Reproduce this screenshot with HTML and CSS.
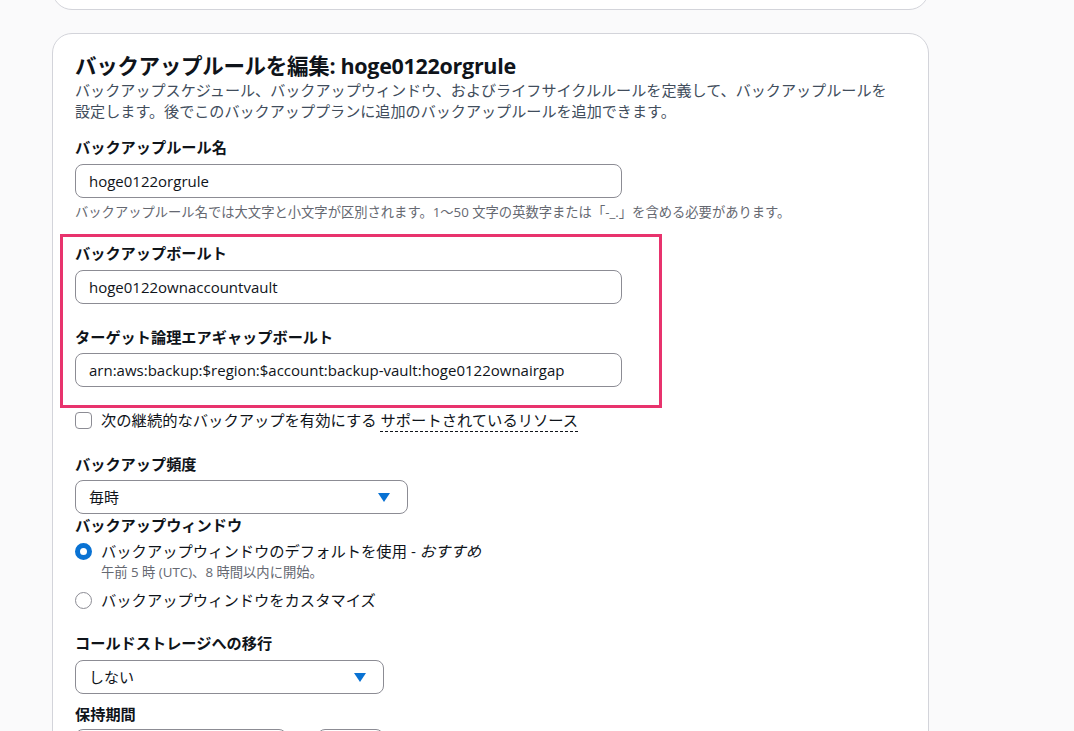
FILE: index.html
```html
<!DOCTYPE html>
<html lang="ja">
<head>
<meta charset="utf-8">
<title>バックアップルールを編集</title>
<link rel="stylesheet" href="styles.css">
</head>
<body>
<div class="page">
  <div class="card card-prev"></div>
  <div class="card card-main">
    <h2 class="title">バックアップルールを編集: hoge0122orgrule</h2>
    <p class="desc">バックアップスケジュール、バックアップウィンドウ、およびライフサイクルルールを定義して、バックアップルールを設定します。後でこのバックアッププランに追加のバックアップルールを追加できます。</p>

    <div class="label l1">バックアップルール名</div>
    <div class="input w-full">hoge0122orgrule</div>
    <div class="hint">バックアップルール名では大文字と小文字が区別されます。1〜50 文字の英数字または「-_.」を含める必要があります。</div>

    <div class="highlight">
      <div class="label hl1">バックアップボールト</div>
      <div class="input w-full">hoge0122ownaccountvault</div>
      <div class="label hl2">ターゲット論理エアギャップボールト</div>
      <div class="input w-full hin2">arn:aws:backup:$region:$account:backup-vault:hoge0122ownairgap</div>
    </div>

    <div class="check-row">
      <span class="checkbox"></span>
      <span class="opt-text">次の継続的なバックアップを有効にする <span class="dotted">サポートされているリソース</span></span>
    </div>

    <div class="label l-freq">バックアップ頻度</div>
    <div class="input select w-freq">毎時<span class="arrow"></span></div>

    <div class="label l-win">バックアップウィンドウ</div>
    <div class="radio-row r1">
      <span class="radio checked"></span>
      <span class="opt-text">バックアップウィンドウのデフォルトを使用 - <em>おすすめ</em></span>
    </div>
    <div class="sub">午前 5 時 (UTC)、8 時間以内に開始。</div>
    <div class="radio-row r2">
      <span class="radio"></span>
      <span class="opt-text">バックアップウィンドウをカスタマイズ</span>
    </div>

    <div class="label l-cold">コールドストレージへの移行</div>
    <div class="input select w-cold">しない<span class="arrow"></span></div>

    <div class="label l-ret">保持期間</div>
    <div class="ret-row">
      <div class="input w-ret1"></div>
      <div class="input w-ret2"></div>
    </div>
  </div>
</div>
</body>
</html>
```
FILE: styles.css
```css
html, body {
  margin: 0;
  padding: 0;
  background: #fafafb;
  height: 100%;
  overflow: hidden;
}
body {
  font-family: "Open Sans", "Noto Sans CJK JP", sans-serif;
  color: #0f141a;
}
.page {
  padding-left: 52px;
  width: 877px;
}
.card {
  background: #ffffff;
  border: 1px solid #d3d4da;
  border-radius: 20px;
  box-sizing: border-box;
}
.card-prev {
  height: 50px;
  margin-top: -40px;
}
.card-main {
  margin-top: 23px;
  padding: 18px 22px 40px 22px;
  height: 760px;
}
.title {
  margin: 0;
  font-size: 21.5px;
  line-height: 28px;
  font-weight: 700;
  letter-spacing: -0.3px;
}
.desc {
  margin: 0;
  font-size: 15.1px;
  line-height: 21px;
  color: #414d5c;
  width: 822px;
}
.label {
  font-size: 15.2px;
  line-height: 20px;
  font-weight: 700;
  color: #0f141a;
}
.l1 { margin-top: 15px; }
.input {
  box-sizing: border-box;
  height: 34px;
  border: 1px solid #8c8c94;
  border-radius: 8px;
  padding: 0 13px;
  font-size: 15px;
  line-height: 32px;
  color: #0f141a;
  margin-top: 7px;
  background: #fff;
}
.w-full { width: 547px; }
.hint {
  margin-top: 5px;
  font-size: 13.3px;
  line-height: 18px;
  color: #656871;
}
.highlight {
  margin-top: 13px;
  margin-left: -15px;
  width: 602px;
  box-sizing: border-box;
  border: 3px solid #e8336d;
  padding: 6px 0 18px 12px;
}
.hl2 { margin-top: 23px; }
.hin2 { margin-top: 6px; }
.check-row, .radio-row {
  display: flex;
  align-items: center;
  font-size: 15.3px;
  line-height: 22px;
  height: 22px;
}
.check-row { margin-top: 1px; }
.checkbox {
  width: 17px;
  height: 17px;
  box-sizing: border-box;
  border: 1.5px solid #8c8c94;
  border-radius: 4px;
  margin-right: 9px;
  flex: none;
}
.opt-text { color: #0f141a; }
.dotted {
  border-bottom: 1px dashed #0f141a;
  padding-bottom: 1px;
}
.l-freq { margin-top: 23px; }
.select {
  display: flex;
  align-items: center;
  justify-content: space-between;
  padding-right: 17px;
  margin-top: 6px;
}
.w-freq { width: 333px; }
.w-cold { width: 309px; }
.arrow {
  width: 0;
  height: 0;
  border-left: 6px solid transparent;
  border-right: 6px solid transparent;
  border-top: 9px solid #0972d3;
}
.l-win { margin-top: 1px; }
.radio-row.r1 { margin-top: 5px; }
.radio {
  width: 17px;
  height: 17px;
  box-sizing: border-box;
  border: 1.5px solid #8c8c94;
  border-radius: 50%;
  margin-right: 9px;
  flex: none;
  background: #fff;
}
.radio.checked {
  border: 5px solid #0972d3;
}
.radio-row em {
  font-style: italic;
}
.sub {
  margin-top: 1px;
  padding-left: 26px;
  font-size: 13.3px;
  line-height: 18px;
  color: #656871;
}
.radio-row.r2 { margin-top: 8px; }
.l-cold { margin-top: 22px; }
.w-cold { margin-top: 7px; }
.l-ret { margin-top: 10px; }
.ret-row {
  display: flex;
  gap: 30px;
  margin-top: -2px;
}
.w-ret1 { width: 212px; }
.w-ret2 { width: 67px; }
```
